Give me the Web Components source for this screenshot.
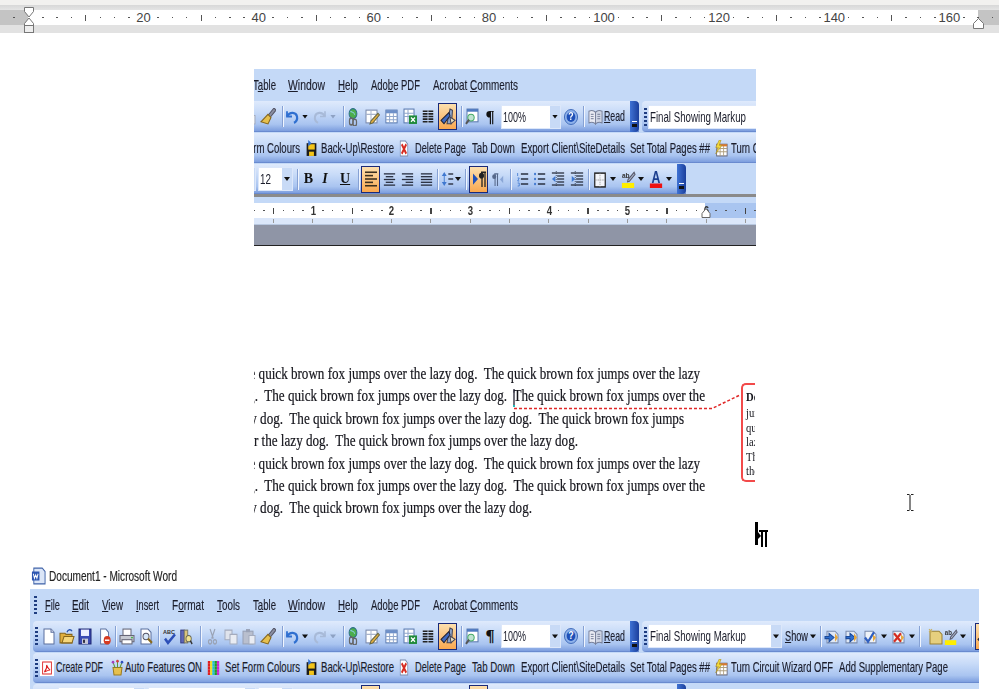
<!DOCTYPE html>
<html><head><meta charset="utf-8"><title>Word</title>
<style>
html,body{margin:0;padding:0;background:#fff;width:999px;height:689px;overflow:hidden;font-family:"Liberation Sans",Arial,sans-serif}
word-window.crop{margin-left:254px;width:502px;height:177px;margin-top:36px}
word-window.full{margin-left:30px;width:949px;height:100px}
</style></head>
<body>
<page-ruler></page-ruler>
<word-window class="crop" lo="254" hi="756"></word-window>
<doc-text></doc-text>
<title-line>Document1 - Microsoft Word</title-line>
<word-window class="full" lo="30" hi="979"></word-window>
<script>
const mosaic=(()=>{const c=['#e02020','#20a020','#2030d0','#f0e020','#d020d0','#101010','#20c0d0','#f08020'];let s='',n=0;for(let y=0;y<5;y++)for(let x=0;x<5;x++){s+=`<rect x="${1+x*2.8}" y="${1+y*2.8}" width="2.8" height="2.8" fill="${c[(n*3+y)%8]}"/>`;n++}return s})();
const lines=(ys,x1,x2,col='#222',w=1.4)=>ys.map(y=>`<path d="M${x1} ${y}H${x2}" stroke="${col}" stroke-width="${w}"/>`).join('');
const ICONS={
new:`<path d="M3 1h7l3 3v11H3z" fill="#fff" stroke="#5a6f9e"/><path d="M10 1v3h3" fill="#dde" stroke="#5a6f9e"/>`,
open:`<path d="M1 5h5l1 1h6v8H1z" fill="#e0ae3e" stroke="#86661c"/><path d="M3 14l2-6h10l-2 6z" fill="#f6d77c" stroke="#86661c"/><path d="M8 4c1-3 4-3 5-1" fill="none" stroke="#2b55b0" stroke-width="1.3"/>`,
save:`<rect x="2" y="1" width="12" height="14" fill="#3b49b3" stroke="#1c2470"/><rect x="4" y="1.5" width="8" height="6" fill="#eef"/><rect x="5" y="10" width="6" height="5" fill="#c8c8d8"/><rect x="6" y="11" width="2" height="3" fill="#334"/>`,
perm:`<path d="M3 1h6l3 3v11H3z" fill="#fff" stroke="#5a6f9e"/><circle cx="10.5" cy="11.5" r="4" fill="#d63a20"/><path d="M8 11.5h5" stroke="#fff" stroke-width="1.4"/>`,
print:`<rect x="4" y="1" width="8" height="6" fill="#fff" stroke="#667"/><path d="M1 7h14v6H1z" fill="#c6c9d2" stroke="#667"/><rect x="3" y="11" width="10" height="4" fill="#fff" stroke="#667"/><circle cx="13" cy="9" r=".8" fill="#2a2"/>`,
preview:`<path d="M3 1h7l3 3v11H3z" fill="#fff" stroke="#5a6f9e"/><circle cx="8" cy="8" r="3" fill="#d8e8f8" stroke="#556"/><path d="M10 10l4 4" stroke="#8a6a1e" stroke-width="2"/>`,
spell:`<text x="1" y="6" font-family="Liberation Sans" font-size="5.5" font-weight="700" fill="#333">ABC</text><path d="M3 10l3 4 7-8" fill="none" stroke="#2c4fb8" stroke-width="2.4"/>`,
research:`<rect x="2" y="2" width="4" height="12" fill="#5f66b8" stroke="#333a80"/><rect x="6" y="2" width="4" height="12" fill="#d9c37a" stroke="#776"/><circle cx="11" cy="10" r="3" fill="#f2e28e" stroke="#665"/><path d="M13 12l2 3" stroke="#333" stroke-width="1.6"/>`,
cut:`<path d="M5 1l4 9M11 1L7 10" stroke="#9aa3b5" stroke-width="1.4"/><circle cx="5" cy="13" r="2" fill="none" stroke="#9aa3b5" stroke-width="1.3"/><circle cx="11" cy="13" r="2" fill="none" stroke="#9aa3b5" stroke-width="1.3"/>`,
copy:`<path d="M2 2h7v9H2z" fill="#dfe3ec" stroke="#a4abbd"/><path d="M7 6h7v9H7z" fill="#e9ecf3" stroke="#a4abbd"/>`,
paste:`<rect x="2" y="3" width="10" height="12" fill="#b9bfce" stroke="#98a0b4"/><rect x="5" y="1" width="4" height="3" fill="#9aa2b6"/><path d="M8 7h6v8H8z" fill="#e9ecf3" stroke="#a4abbd"/>`,
painter:`<path d="M14 0l2 2-6 7-2-2z" fill="#8a8fa2" stroke="#556"/><path d="M8 6l3 3-3 6-7-2z" fill="#e6c04e" stroke="#86661c"/>`,
undo:`<path d="M3 3v5h5" fill="none" stroke="#2f6fd0" stroke-width="1.8"/><path d="M3 8c3-5 9-4 10 0 .6 3-1 5-3 6" fill="none" stroke="#2f6fd0" stroke-width="2.2"/>`,
redo:`<path d="M13 3v5H8" fill="none" stroke="#a8bad8" stroke-width="1.6"/><path d="M13 8C10 3 4 4 3 8c-.6 3 1 5 3 6" fill="none" stroke="#a8bad8" stroke-width="2"/>`,
link:`<circle cx="8" cy="5" r="4.5" fill="#4cae4c" stroke="#2a6a8a"/><path d="M5 3c2 1 4 0 5 3" stroke="#8cd" fill="none"/><rect x="4" y="9" width="4" height="6" rx="2" fill="none" stroke="#666" stroke-width="1.4"/><rect x="8" y="10" width="4" height="6" rx="2" fill="none" stroke="#666" stroke-width="1.4"/>`,
tborder:`<rect x="2" y="2" width="11" height="12" fill="#fff" stroke="#7a8aac"/><path d="M2 6h11M7 2v12" stroke="#a8b4cc"/><path d="M14 5l1.5 1.5L9 14l-3 1 1-3z" fill="#e6b03e" stroke="#664"/>`,
table:`<rect x="2" y="2" width="12" height="12" fill="#fff" stroke="#5a7ab0"/><rect x="2" y="2" width="12" height="3" fill="#6e90c8"/><path d="M2 8h12M2 11h12M6 5v9M10 5v9" stroke="#8fa6cc"/>`,
excel:`<rect x="2" y="1" width="10" height="13" fill="#fff" stroke="#5a7ab0"/><path d="M2 5h10M2 8h10M6 1v13" stroke="#8fa6cc"/><rect x="7" y="7" width="8" height="8" fill="#1f8a3a"/><path d="M9 9l4 4M13 9l-4 4" stroke="#fff" stroke-width="1.3"/>`,
columns:`<path d="M2 3h12M2 5.500h12M2 8h12M2 10.500h12M2 13h12" stroke="#222" stroke-width="1.5"/><path d="M8 2v12" stroke="#c3d3ee" stroke-width="1"/>`,
draw:`<path d="M10 1l2.500 1-1 12H7z" fill="#8fa5c8" stroke="#445"/><path d="M1 11l8-7 1 3-6 7z" fill="#3f6ac0" stroke="#223"/><path d="M10 8l5 3-4 3z" fill="#e8e0c0" stroke="#445"/>`,
docmap:`<rect x="3" y="1" width="11" height="12" fill="#fff" stroke="#5a7ab0"/><rect x="3" y="1" width="11" height="2.500" fill="#4f7ac0"/><circle cx="7" cy="9" r="3.200" fill="#bfe2d0" stroke="#4a6"/><path d="M5 11l-3 4" stroke="#555" stroke-width="2"/>`,
read:`<path d="M1 3c3-1 5-1 7 1v11c-2-2-4-2-7-1z" fill="#e9eaf2" stroke="#77809a"/><path d="M15 3c-3-1-5-1-7 1v11c2-2 4-2 7-1z" fill="#cfd5e4" stroke="#77809a"/><path d="M3 6h3M3 8h3M3 10h3M10 6h3M10 8h3M10 10h3" stroke="#8890a8"/>`,
help:`<circle cx="8" cy="8" r="7.500" fill="#8fb2ea" stroke="#3c68b8"/><circle cx="8" cy="8" r="5" fill="#1f50b8"/><text x="8" y="11.500" text-anchor="middle" font-family="Liberation Sans" font-weight="700" font-size="10" fill="#fff">?</text>`,
ar1:`<path d="M3 3h8l3 3v8H3z" fill="#dfe8f6" stroke="#7a8aac"/><path d="M1 8h4V5l5 4-5 4v-3H1z" fill="#2f6fd0" stroke="#1c4a9a"/><path d="M11 5l3 4-3 4z" fill="#e6a83e"/>`,
ar2:`<path d="M3 3h8l3 3v8H3z" fill="#dfe8f6" stroke="#7a8aac"/><path d="M3 8h4V5l5 4-5 4v-3H3z" fill="#2f6fd0" stroke="#1c4a9a"/><path d="M11 5l3 4-3 4z" fill="#e6a83e"/>`,
ok:`<path d="M3 3h8l3 3v8H3z" fill="#eef2f8" stroke="#7a8aac"/><path d="M3 9l3 4 6-9" fill="none" stroke="#2f5fc0" stroke-width="2.2"/><path d="M11 6l3 3-3 4z" fill="#e6a83e"/>`,
rej:`<path d="M3 3h8l3 3v8H3z" fill="#eef2f8" stroke="#7a8aac"/><path d="M4 5l7 8M11 5l-7 8" stroke="#d62c20" stroke-width="2.200"/><path d="M11 6l3 3-3 4z" fill="#e6a83e"/>`,
note:`<path d="M2 3h9l3 3v9H2z" fill="#e6cf7e" stroke="#9a8030"/><path d="M1 1l3 3M4 1L1 4" stroke="#c8b060"/>`,
hl:`<rect x="1" y="11.500" width="13" height="4.500" fill="#ffee00"/><text x="1" y="7" font-family="Liberation Sans" font-size="7" font-weight="700" fill="#333">ab</text><path d="M14 2l1 2-6 6-2 .5.500-2z" fill="#a8b4cc" stroke="#556"/>`,
pdf:`<rect x="0" y="0" width="16" height="16" fill="#fff"/><rect x="3" y="2" width="10" height="12" fill="#fff" stroke="#d22"/><path d="M5 12c2-2 3-5 2.500-7 1 2 2 4 4 5-2 0-4 1-6.500 2z" fill="none" stroke="#d22" stroke-width="1.200"/>`,
pot:`<path d="M4 8h9l-1 7H5z" fill="#e6c04e" stroke="#9a7a20"/><path d="M6 8L4 3M8.500 8V2M11 8l2-5" stroke="#5a9a3a"/><circle cx="4" cy="3" r="1.300" fill="#a040c0"/><circle cx="8.500" cy="2" r="1.300" fill="#d04040"/><circle cx="13" cy="3" r="1.300" fill="#3050c0"/>`,
mosaic:mosaic,
save2:`<rect x="2" y="3" width="12" height="12" fill="#1c1c1c"/><rect x="4" y="4" width="8" height="5" fill="#f3c419"/><rect x="5" y="11" width="6" height="4" fill="#f3c419"/><path d="M4 0l4 3-4 3z" fill="#2f6fd0"/>`,
del:`<path d="M3 1h7l3 3v11H3z" fill="#fff" stroke="#7a8aac"/><path d="M5 4l6 9M11 4l-6 9" stroke="#d62c20" stroke-width="2.400"/>`,
wiz:`<rect x="3" y="4" width="12" height="11" fill="#fff" stroke="#667"/><path d="M3 8h12M3 11h12M7 4v11M11 4v11" stroke="#b0a080"/><rect x="3" y="4" width="12" height="2" fill="#d87a30"/><path d="M6 0L2 7h3l-3 6 7-8H6l2-5z" fill="#f3dc3c" stroke="#a88a20" stroke-width=".6"/>`,
doc:`<path d="M3 1h9l3 3v11H3z" fill="#dbe6f8" stroke="#3f62a8"/><path d="M1 4h8v8H1z" fill="#2c55b0"/><path d="M2.500 6l1.200 4 1.300-3 1.300 3L7.500 6" fill="none" stroke="#fff"/>`,
alignL:lines([2,8,14],2,14,'#3a3020',1.400)+lines([5,11],2,10,'#3a3020',1.400),
alignC:lines([2,8,14],2,14,'#2a3040',1.400)+lines([5,11],4,12,'#2a3040',1.400),
alignR:lines([2,8,14],2,14,'#2a3040',1.400)+lines([5,11],6,14,'#2a3040',1.400),
alignJ:lines([2,5,8,11,14],2,14,'#2a3040',1.400),
space:`<path d="M4 1l3 4H1zM4 15l3-4H1z" fill="#3f78d0"/><path d="M4 4v8" stroke="#3f78d0"/>`+lines([3,8,13],9,15,'#2a3040',1.400),
ltr:`<path d="M2 3l5 5-5 5z" fill="#1f50b8"/><path d="M10 2h5M11 2v13M14 2v13" stroke="#222" stroke-width="1.300"/><circle cx="10.500" cy="5" r="2.500" fill="#222"/>`,
rtl:`<path d="M15 4l-4 4 4 4z" fill="#8aa6d6"/><path d="M4 2h5M5 2v13M8 2v13" stroke="#56688a" stroke-width="1.300"/><circle cx="4" cy="5" r="2.500" fill="#56688a"/>`,
num:`<path d="M2 2v3M2 7h2l-2 3h2M2 12h2v3H2" stroke="#3f78d0" stroke-width=".9" fill="none"/>`+lines([3,8,13],6,15,'#2a3040',1.500),
bul:`<circle cx="2.500" cy="3" r="1.300" fill="#3f78d0"/><circle cx="2.500" cy="8" r="1.300" fill="#3f78d0"/><circle cx="2.500" cy="13" r="1.300" fill="#3f78d0"/>`+lines([3,8,13],6,15,'#2a3040',1.500),
outd:lines([2,14],1,15,'#2a3040',1.300)+lines([5,8,11],7,15,'#2a3040',1.300)+`<path d="M1 8l4-3v6z" fill="#3f78d0"/><path d="M6 0v16" stroke="#2a3040" stroke-dasharray="1 1" stroke-width=".8"/>`,
ind:lines([2,14],1,15,'#2a3040',1.300)+lines([5,8,11],7,15,'#2a3040',1.300)+`<path d="M6 8L2 5v6z" fill="#3f78d0"/><path d="M6 0v16" stroke="#2a3040" stroke-dasharray="1 1" stroke-width=".8"/>`,
border:`<rect x="2" y="2" width="12" height="13" fill="#f4f6fb" stroke="#222" stroke-width="1.400"/><path d="M2 8.500h12M8 2v13" stroke="#888" stroke-dasharray="1 1"/>`,
fcolor:`<text x="8" y="11.500" text-anchor="middle" font-family="Liberation Sans" font-weight="700" font-size="14" fill="#1d3f8f">A</text><rect x="1" y="12" width="14" height="4" fill="#ee1111"/>`
};
class TbIcon extends HTMLElement{connectedCallback(){const w=this.getAttribute('w')||16,h=this.getAttribute('h')||17;
 this.attachShadow({mode:'open'}).innerHTML=`<style>:host{display:block;flex:none;width:${w}px;height:${h}px}svg{display:block;width:100%;height:100%}</style><svg viewBox="0 0 16 16" preserveAspectRatio="none">${ICONS[this.getAttribute('name')]||''}</svg>`}}
customElements.define('tb-icon',TbIcon);
class FitText extends HTMLElement{connectedCallback(){const w=+this.getAttribute('w');
 const r=this.attachShadow({mode:'open'});r.innerHTML=`<style>:host{display:block;flex:none;width:${w}px;white-space:pre}span{display:inline-block;transform-origin:0 50%}</style><span><slot></slot></span>`;
 const s=r.querySelector('span');const n=s.getBoundingClientRect().width;if(n>0)s.style.transform=`scaleX(${w/n})`}}
customElements.define('fit-text',FitText);

const STD=[['g',36],['i','new',49],['i','open',67],['i','save',85],['i','perm',105,14],['s',115],['i','print',127],['i','preview',146],['s',158],['i','spell',170],['i','research',186,14],['s',200],['i','cut',212,13],['i','copy',231],['i','paste',249],['i','painter',268],['s',282],['i','undo',292],['d',305],['i','redo',320],['dl',333],['s',343],['i','link',353,14,18],['i','tborder',372],['i','table',391,15],['i','excel',410],['i','columns',428,14],['a',438,19,'draw'],['s',461],['i','docmap',472],['t',485,10,'¶','pil'],['b',501,60,23,'100%'],['i','help',571,14,16],['s',583],['i','read',595,15],['l',604,21,'<u>R</u>ead']];
const REV=[['g',645],['b',648,134,96,'Final Showing Markup'],['l',785,23,'<u>S</u>how'],['d',813],['s',820],['i','ar1',832],['i','ar2',851],['i','ok',870],['d',884],['i','rej',898],['d',912],['s',919],['i','note',936],['i','hl',951,14],['d',963],['s',971],['a',975,19,'draw']];
const R3=[['g',36],['i','pdf',47,14,16],['l',56,47,'Create PDF'],['i','pot',117],['l',125,77,'Auto Features ON'],['i','mosaic',213,13,16],['l',225,75,'Set Form Colours'],['i','save2',311,13],['l',321,73,'Back-Up\\Restore'],['i','del',404,12],['l',415,51,'Delete Page'],['l',472,43,'Tab Down'],['l',521,104,'Export Client\\SiteDetails'],['l',630,80,'Set Total Pages ##'],['i','wiz',721,14],['l',731,102,'Turn Circuit Wizard OFF'],['l',839,109,'Add Supplementary Page']];
const R4=[['g',36],['b',58,87,0,''],['b',148,108,0,''],['b',258,35,11,'12'],['s',297],['t',303,11,'B','fb'],['t',320,10,'I','fi'],['t',340,10,'U','fu'],['s',358],['a',361,19,'alignL'],['i','alignC',389,15,15],['i','alignR',407,15,15],['i','alignJ',426,15,15],['s',437],['i','space',447,13,16],['d',458],['s',465],['a',469,19,'ltr'],['i','rtl',497,13,15],['s',510],['i','num',522,13,16],['i','bul',539,13,16],['i','outd',558,14,16],['i','ind',577,14,16],['s',588],['i','border',600,14,17],['d',613],['i','hl',628,15,18],['d',641],['i','fcolor',656,14,18],['d',669]];
const MENU=[['g',35],['l',45,15,'<u>F</u>ile'],['l',72,17,'<u>E</u>dit'],['l',102,21,'<u>V</u>iew'],['l',136,23,'<u>I</u>nsert'],['l',172,32,'F<u>o</u>rmat'],['l',217,23,'<u>T</u>ools'],['l',253,23,'T<u>a</u>ble'],['l',288,37,'<u>W</u>indow'],['l',338,20,'<u>H</u>elp'],['l',371,49,'Ado<u>b</u>e PDF'],['l',433,85,'Acrobat <u>C</u>omments']];

function extent(s){const k=s[0];if(k=='l'||k=='a'||k=='t'||k=='b')return [s[1],s[2]];if(k=='i'){const w=s[3]||16;return [s[2]-w/2,w]}if(k=='s')return [s[1],2];if(k=='g')return [s[1]-1.5,3];return [s[1]-3,6]}
function items(spec,start,lo,hi,boxOnly){let c=start,h='';
 for(const s of spec){const [x,w]=extent(s),k=s[0];
  if(x+w<=lo||x>=hi)continue;
  if(boxOnly&&k!='a'&&k!='b')continue;
  const m=x-c,st=`style="margin-left:${m}px;width:${w}px"`;c=x+w;
  if(k=='l')h+=`<fit-text class="lb" style="margin-left:${m}px" w="${w}">${s[3]}</fit-text>`;
  if(k=='i')h+=`<tb-icon style="margin-left:${m}px" name="${s[1]}" w="${w}" h="${s[4]||17}"></tb-icon>`;
  if(k=='s')h+=`<i class="sep" ${st}></i>`;
  if(k=='d')h+=`<i class="dd" ${st}></i>`;
  if(k=='dl')h+=`<i class="dd lt" ${st}></i>`;
  if(k=='g')h+=`<i class="grip" ${st}></i>`;
  if(k=='a')h+=`<span class="act" ${st}><tb-icon name="${s[3]}" w="16" h="18"></tb-icon></span>`;
  if(k=='t')h+=`<span class="${s[4]}" ${st}>${s[3]}</span>`;
  if(k=='b')h+=`<span class="box" ${st}><span class="boxw">${s[3]&&!boxOnly?`<fit-text w="${s[3]}">${s[4]}</fit-text>`:''}</span><i class="dbtn"><i class="dd"></i></i></span>`;
 }
 return h}
function bar(spec,start,end,lo,hi,handle,boxOnly,ml){return `<div class="bar" style="margin-left:${ml}px;width:${end-start}px">${items(spec,start,lo,hi,boxOnly)}${handle?'<i class="handle"><b></b></i>':''}</div>`}
function cells(marks){let h='';for(let i=-20;i<=72;i++){const n=i/8;let c='<i class="dot"></i>';
 if(marks)c=i%4==0?'<i class="mk"></i>':'';
 else if(i%8==0&&i>0)c=`<span class="n">${n}</span>`;else if(i%4==0)c='<i class="tick"></i>';
 h+=`<span class="c">${c}</span>`}return h}

class WordWindow extends HTMLElement{connectedCallback(){const lo=+this.getAttribute('lo'),hi=+this.getAttribute('hi'),crop=lo>30;
 this.attachShadow({mode:'open'}).innerHTML=`<style>
:host{display:block;overflow:hidden;background:#c4d9f7;color:#1b1d2b;font:14.500px "Liberation Sans",Arial,sans-serif}
.w{width:949px;margin-left:${30-lo}px;filter:blur(.3px)}
.row{display:flex;align-items:center;height:31px}
.menu{height:32px;box-sizing:border-box}
.g1{margin-top:1px;height:30px}
.bar{display:flex;align-items:center;flex:none;height:100%;border-radius:4px 0 0 4px;background:linear-gradient(#dfeafc,#c8dbf8 35%,#a9c4f0 75%,#7e9fdf 96%,#5b7cc4)}
fit-text.lb{-webkit-text-stroke:.15px #1b1d2b;margin-top:-1px}
.menu fit-text.lb{margin-top:0}
i{display:block;flex:none;box-sizing:border-box}
.grip{height:18px;background:repeating-linear-gradient(#1f3d80 0 2px,transparent 2px 4px)}
.sep{height:21px;background:#86a1d4;border-right:1px solid #f0f5fe}
.dd{height:4px;background:#111;clip-path:polygon(0 0,100% 0,50% 100%)}
.dd.lt{background:#8ea2c4}
.act{flex:none;box-sizing:border-box;height:27px;border:1.500px solid #1a2a78;background:linear-gradient(#fde0ae,#f9a850);display:flex;align-items:center;justify-content:center}
.box{flex:none;display:flex;height:24px;background:#fff;align-items:center;box-sizing:border-box;border:1px solid #dce7fa}
.boxw{flex:1;padding-left:1px;white-space:nowrap;overflow:hidden;min-width:0}
.dbtn{width:10px;height:100%;background:#c8daf6;display:flex;align-items:center;justify-content:center}
.dbtn .dd{width:6px}
.pil{font:700 17px "Liberation Serif",serif;color:#111;text-align:center;flex:none}
.fb,.fi,.fu{font:700 14px "Liberation Serif",serif;color:#111;text-align:center;flex:none}
.fi{font-style:italic}.fu{text-decoration:underline}
.handle{margin-left:auto;width:9px;height:100%;background:linear-gradient(90deg,#3f72d4,#1b3f9c);border-radius:0 4px 4px 0;position:relative}
.handle b{position:absolute;left:2px;bottom:5px;width:5px;height:6px;background:linear-gradient(#fff 0 1px,transparent 1px 3px,#111 3px)}
.line{height:3px;background:#8a8a8a}.st{height:6px}
.rul{height:15px;display:flex;align-items:center;padding-left:2.880px;background:linear-gradient(90deg,#fff 675px,#a9c5f0 675px);position:relative;overflow:hidden}
.rul2{height:7px;display:flex;padding-left:2.880px;background:#dbe7fa;border-bottom:1px solid #b8c8e0;box-sizing:border-box}
.c{flex:none;width:9.840px;display:flex;justify-content:center;align-items:center;height:100%}
.dot{width:1.500px;height:1.500px;background:#555}.tick{width:1.500px;height:6px;background:#444}
.n{font:700 12px "Liberation Sans",Arial,sans-serif;color:#333;transform:scaleX(.8)}
.mk{width:1px;height:4px;background:#9a9a9a}
.gray{height:21px;background:#8f95a6;border-bottom:1px solid #222;box-sizing:border-box}
.tri{position:absolute;left:671px;top:5px;width:10px;height:10px}
</style><div class="w">
<div class="row menu">${items(MENU,30,lo,hi)}</div>
<div class="row">${bar(STD,33,639,lo,hi,true,false,3)}${bar(REV,642,979,lo,hi,false,false,3)}</div>
<div class="row g1">${bar(R3,33,979,lo,hi,false,false,3)}</div>
<div class="row g1">${bar(R4,33,686,lo,hi,true,!crop,3)}</div>
${crop?`<div class="line"></div><div class="st"></div>
<div class="rul">${cells(false)}<svg class="tri" viewBox="0 0 10 10"><path d="M5 .5l4 5v4H1v-4z" fill="#fff" stroke="#666"/></svg></div>
<div class="rul2">${cells(true)}</div>
<div class="gray"></div>`:''}
</div>`}}
customElements.define('word-window',WordWindow);

class PageRuler extends HTMLElement{connectedCallback(){let h='';for(let i=-2;i<=67;i++){let c='<i class="dot"></i>';if(i==0)c='';else if(i%8==0&&i>0)c=`<span>${i/8*20}</span>`;else if(i%4==0)c='<i class="tick"></i>';h+=`<b>${c}</b>`}
 this.attachShadow({mode:'open'}).innerHTML=`<style>
:host{display:block;height:33px;position:relative;background:#f2f1ef;overflow:hidden;font:13px "Liberation Sans",Arial,sans-serif;color:#444}
.top{height:5px}.e1{height:5px;background:linear-gradient(#d8d8d8,#e4e4e4)}
.r{height:15px;display:flex;align-items:center;margin-left:-7.600px;width:1100px;background:linear-gradient(90deg,#c4c4c4 35.600px,#fff 35.600px,#fff 985.600px,#c4c4c4 985.600px)}
.e2{height:8px;background:#e2e2e2}
b{flex:none;width:14.400px;display:flex;justify-content:center;align-items:center;font-weight:400}
i{display:block;flex:none}
.dot{width:1.500px;height:1.500px;background:#555}.tick{width:1px;height:6px;background:#555}
svg{position:absolute}
</style><div class="top"></div><div class="e1"></div><div class="r">${h}</div><div class="e2"></div>
<svg style="left:23px;top:7px" width="12" height="26" viewBox="0 0 12 26"><path d="M1.500.5h9v4L6 10 1.500 4.500z" fill="#fff" stroke="#777"/><path d="M6 11l4.500 5.500v2h-9v-2z" fill="#fff" stroke="#777"/><rect x="1.500" y="18.500" width="9" height="7" fill="#eee" stroke="#777"/></svg>
<svg style="left:973px;top:18px" width="11" height="11" viewBox="0 0 11 11"><path d="M5.500.5l5 5v5H.5v-5z" fill="#fff" stroke="#777"/></svg>`}}
customElements.define('page-ruler',PageRuler);

const L=[[465,'The quick brown fox jumps over the lazy dog.  The quick brown fox jumps over the lazy'],[470,'dog.  The quick brown fox jumps over the lazy dog.  The quick brown fox jumps over the'],[449,'lazy dog.  The quick brown fox jumps over the lazy dog.  The quick brown fox jumps'],[343,'over the lazy dog.  The quick brown fox jumps over the lazy dog.'],[465,'The quick brown fox jumps over the lazy dog.  The quick brown fox jumps over the lazy'],[470,'dog.  The quick brown fox jumps over the lazy dog.  The quick brown fox jumps over the'],[297,'lazy dog.  The quick brown fox jumps over the lazy dog.']];
class DocText extends HTMLElement{connectedCallback(){
 this.attachShadow({mode:'open'}).innerHTML=`<style>
:host{display:flex;margin-top:117px;height:156.800px;position:relative;font:16px/22.400px "Liberation Serif","Times New Roman",serif;color:#15151c}
.clip{margin-left:254px;width:456px;flex:none;overflow:hidden;filter:blur(.25px);-webkit-text-stroke:.2px #15151c}
fit-text{margin-left:-19px;height:22.400px}
.bal{flex:none;margin:20px 0 0 31px;width:14px;height:99px;box-sizing:border-box;border:2px solid #f24a4a;border-right:0;border-radius:5px 0 0 5px;overflow:hidden;padding:4px 0 0 3px;font-size:12.500px;line-height:14.500px;white-space:nowrap;filter:blur(.25px)}
.bal div{transform:scaleX(.85);transform-origin:0 50%}
.bal .h{font-weight:700;line-height:17px}
svg{position:absolute;left:0;top:0;overflow:visible}
</style><div class="clip">${L.map(l=>`<fit-text w="${l[0]}">${l[1]}</fit-text>`).join('')}</div>
<div class="bal"><div class="h">Deleted:</div><div>jumps</div><div>quick</div><div>lazy</div><div>The</div><div>the</div></div>
<svg width="999" height="200" viewBox="0 0 999 200">
<path d="M514 26v17" stroke="#223" stroke-width="1.300"/><rect x="513" y="42" width="2" height="2" fill="#2bb"/>
<path d="M514 45.500H712L740 32" fill="none" stroke="#e02828" stroke-width="1.500" stroke-dasharray="3 2"/>
<path d="M907 131.500h2.500M911 131.500h2.500M907 147.500h2.500M911 147.500h2.500M910 132v15" fill="none" stroke="#222" stroke-width="1.100"/>
<path d="M756.500 159v23" stroke="#000" stroke-width="3"/><path d="M758 169l3 4-3 3z" fill="#000"/><path d="M759 167h9v2h-1v15h-2v-15h-2v15h-2v-15h-2z" fill="#000"/>
</svg>`}}
customElements.define('doc-text',DocText);
class TitleLine extends HTMLElement{connectedCallback(){
 this.attachShadow({mode:'open'}).innerHTML=`<style>
:host{display:flex;align-items:center;height:23.200px;margin-top:46px;padding:0 0 3px 31px;box-sizing:border-box;font:14px "Liberation Sans",Arial,sans-serif;color:#222}
fit-text{margin-left:3px;filter:blur(.25px);-webkit-text-stroke:.15px #222}
</style><tb-icon name="doc" w="15" h="18"></tb-icon><fit-text w="128"><slot></slot></fit-text>`}}
customElements.define('title-line',TitleLine);
</script>
</body></html>
